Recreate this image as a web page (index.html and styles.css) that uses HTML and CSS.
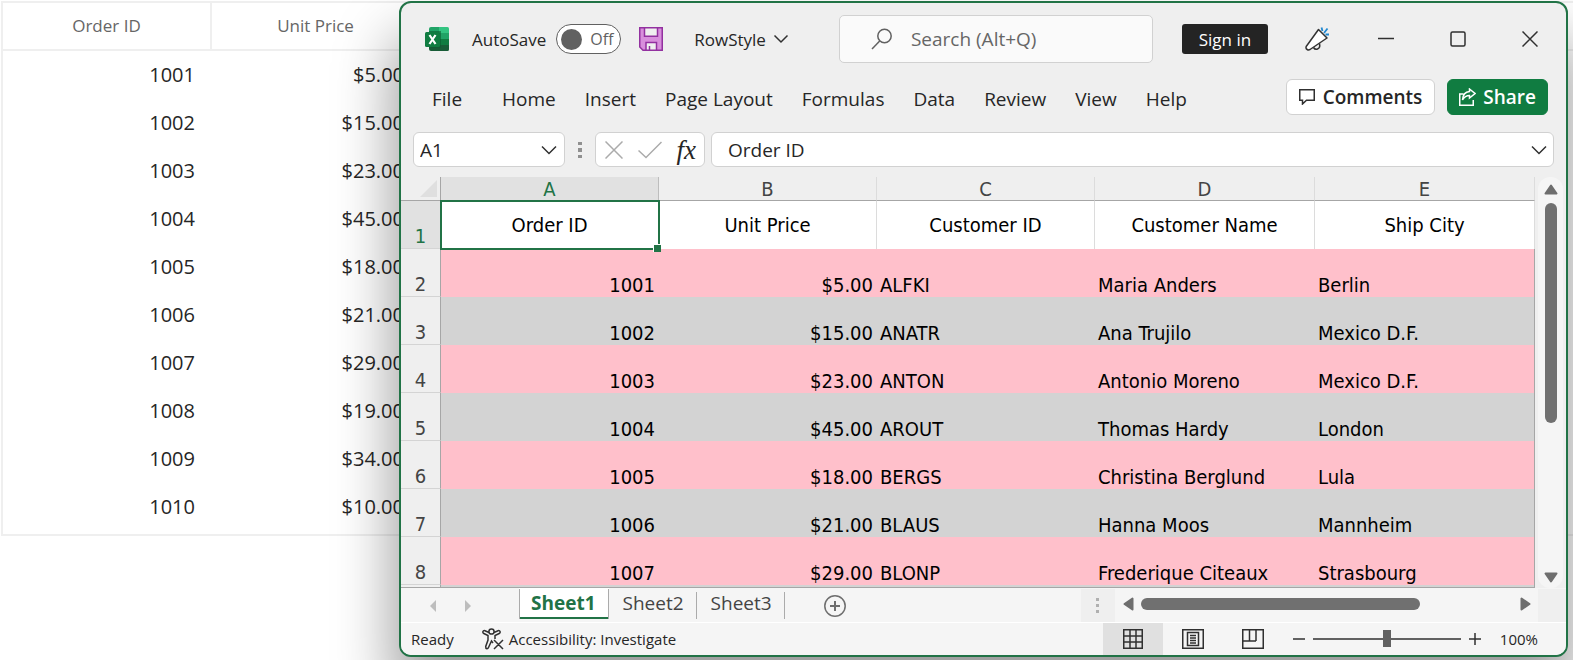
FILE: index.html
```html
<!DOCTYPE html>
<html lang="en">
<head>
<meta charset="utf-8">
<title>RowStyle</title>
<link rel="stylesheet" href="styles.css">
</head>
<body>
<main class="desktop">
  <table class="orders">
    <thead>
      <tr><th>Order ID</th><th>Unit Price</th><th class="rest"></th></tr>
    </thead>
    <tbody>
      <tr><td>1001</td><td>$5.00</td><td></td></tr>
      <tr><td>1002</td><td>$15.00</td><td></td></tr>
      <tr><td>1003</td><td>$23.00</td><td></td></tr>
      <tr><td>1004</td><td>$45.00</td><td></td></tr>
      <tr><td>1005</td><td>$18.00</td><td></td></tr>
      <tr><td>1006</td><td>$21.00</td><td></td></tr>
      <tr><td>1007</td><td>$29.00</td><td></td></tr>
      <tr><td>1008</td><td>$19.00</td><td></td></tr>
      <tr><td>1009</td><td>$34.00</td><td></td></tr>
      <tr><td>1010</td><td>$10.00</td><td></td></tr>
    </tbody>
  </table>

  <section class="window">
    <header class="titlebar">
      <svg class="app-icon" width="24" height="24" viewBox="0 0 24 24" aria-hidden="true">
        <path fill="#21a366" d="M6 0h9v6H4V2a2 2 0 0 1 2-2z"/>
        <path fill="#33c481" d="M14 0h8.500Q24 0 24 1.500V6H14z"/>
        <path fill="#107c41" d="M4 6h10v6H4z"/>
        <path fill="#21a366" d="M14 6h10v6H14z"/>
        <path fill="#185c37" d="M4 12h10v6h10v4.500q0 1.500-1.500 1.500H6q-2 0-2-2z"/>
        <path fill="#107c41" d="M14 12h10v6H14z"/>
        <path fill="#0b5a2f" opacity=".6" d="M4 4h12v16.500H4z"/>
        <rect y="5" width="15" height="15" rx="1.500" fill="#107c41"/>
        <path stroke="#fff" stroke-width="2.200" fill="none" d="M4.500 8l6 9M10.500 8l-6 9"/>
      </svg>
      <label class="autosave">AutoSave
        <span class="toggle"><input type="checkbox"><span>Off</span></span>
      </label>
      <button class="plain save" aria-label="Save">
        <svg width="24" height="24" viewBox="0 0 24 24">
          <path fill="#d88fdc" stroke="#9331a0" stroke-width="1.500" d="M.75.75h22.500v22.500H4L.75 20z"/>
          <path fill="#efefef" stroke="#9331a0" stroke-width="1.500" d="M5.500.75h13v8.500h-13zM7 23.250V15.500h10.500v7.750z"/>
          <path stroke="#9331a0" stroke-width="1.500" d="M10.500 19v4.500"/>
        </svg>
      </button>
      <button class="plain file-name">RowStyle
        <svg width="16" height="10" viewBox="0 0 16 10"><path class="line dark" d="M1.500 1.500L8 8l6.500-6.500"/></svg>
      </button>
      <label class="search">
        <svg width="22" height="22" viewBox="0 0 22 22"><circle class="line gray" cx="13.500" cy="8" r="6.700"/><path class="line gray" d="M8.700 13L1 21"/></svg>
        <input type="search" placeholder="Search (Alt+Q)" aria-label="Search">
      </label>
      <button class="sign-in">Sign in</button>
      <button class="plain whats-new" aria-label="What's new">
        <svg width="24" height="24" viewBox="0 0 24 24">
          <path fill="#fff" stroke="#333" stroke-width="1.500" stroke-linejoin="round" d="M13.500 2.500L22 11 5 22.500q-1.500.8-2.800 0-1.700-1-1-3z"/>
          <path fill="none" stroke="#333" stroke-width="1.500" d="M8.500 20.500q1.500 2.500 4 1.500 3-1 2-5.500"/>
          <path stroke="#1f87d0" stroke-width="1.800" d="M16.500.5l1 3.500M22.500 1.500L19 6M20.500 7.500H24"/>
        </svg>
      </button>
      <div class="window-buttons">
        <button class="plain" aria-label="Minimize"><svg width="16" height="16" viewBox="0 0 16 16"><path class="line dark" d="M0 7.500h16"/></svg></button>
        <button class="plain" aria-label="Maximize"><svg width="16" height="16" viewBox="0 0 16 16"><rect class="line dark" x="1" y="1" width="14" height="14" rx="1.500"/></svg></button>
        <button class="plain" aria-label="Close"><svg width="16" height="16" viewBox="0 0 16 16"><path class="line dark" d="M.5.500l15 15M15.500.500l-15 15"/></svg></button>
      </div>
    </header>

    <nav class="ribbon">
      <button class="plain file-tab">File</button>
      <button class="plain">Home</button>
      <button class="plain">Insert</button>
      <button class="plain">Page Layout</button>
      <button class="plain">Formulas</button>
      <button class="plain">Data</button>
      <button class="plain">Review</button>
      <button class="plain">View</button>
      <button class="plain">Help</button>
      <div class="ribbon-actions">
        <button class="comments">
          <svg width="16" height="16" viewBox="0 0 16 16"><path class="line dark" d="M.75.75h14.500v10.500H7.500L3.500 15v-3.750H.75z"/></svg>
          Comments
        </button>
        <button class="share">
          <svg width="17" height="18" viewBox="0 0 17 18"><path class="line white" d="M4.500 6H.75v11.250h13.500V12M10.500 1l5.500 4.500-5.500 4.500V7.500Q6 7.500 3.500 12 4 4 10.500 3.500z"/></svg>
          Share
        </button>
      </div>
    </nav>

    <div class="formula-bar">
      <div class="name-box">
        <select aria-label="Name box"><option>A1</option></select>
        <svg class="name-chevron" width="16" height="10" viewBox="0 0 16 10"><path class="line dark" d="M1 1.500L8 8.500l7-7"/></svg>
      </div>
      <svg class="grip" width="4" height="16" viewBox="0 0 4 16"><path fill="#909090" d="M0 0h4v3H0zM0 6h4v4H0zM0 13h4v3H0z"/></svg>
      <div class="fx-tools">
        <button class="plain" aria-label="Cancel"><svg width="18" height="18" viewBox="0 0 18 18"><path class="line pale" d="M.5.500l17 17M17.500.500l-17 17"/></svg></button>
        <button class="plain" aria-label="Enter"><svg width="24" height="18" viewBox="0 0 24 18"><path class="line pale" d="M.5 9.500L8 16.500 23.500 1"/></svg></button>
        <button class="plain fx" aria-label="Insert function">fx</button>
      </div>
      <div class="formula">
        <input type="text" value="Order ID" aria-label="Formula">
        <button class="plain" aria-label="Expand formula bar"><svg width="16" height="10" viewBox="0 0 16 10"><path class="line dark" d="M1 1.500L8 8.500l7-7"/></svg></button>
      </div>
    </div>

    <div class="workbook">
      <div class="grid-view">
        <table class="sheet">
          <colgroup><col class="col-index"><col class="col-a"><col class="col-b"><col class="col-b"><col class="col-d"><col></colgroup>
          <thead>
            <tr>
              <th class="corner"><svg width="17" height="17" viewBox="0 0 17 17"><path fill="#dfdfdf" d="M17 0v17H0z"/></svg></th>
              <th class="active">A</th><th>B</th><th>C</th><th>D</th><th>E</th>
            </tr>
          </thead>
          <tbody>
            <tr class="titles"><th class="active">1</th><td class="selected">Order ID<span class="fill-handle"></span></td><td>Unit Price</td><td>Customer ID</td><td>Customer Name</td><td>Ship City</td></tr>
            <tr><th>2</th><td class="num">1001</td><td class="num">$5.00</td><td>ALFKI</td><td>Maria Anders</td><td>Berlin</td></tr>
            <tr><th>3</th><td class="num">1002</td><td class="num">$15.00</td><td>ANATR</td><td>Ana Trujilo</td><td>Mexico D.F.</td></tr>
            <tr><th>4</th><td class="num">1003</td><td class="num">$23.00</td><td>ANTON</td><td>Antonio Moreno</td><td>Mexico D.F.</td></tr>
            <tr><th>5</th><td class="num">1004</td><td class="num">$45.00</td><td>AROUT</td><td>Thomas Hardy</td><td>London</td></tr>
            <tr><th>6</th><td class="num">1005</td><td class="num">$18.00</td><td>BERGS</td><td>Christina Berglund</td><td>Lula</td></tr>
            <tr><th>7</th><td class="num">1006</td><td class="num">$21.00</td><td>BLAUS</td><td>Hanna Moos</td><td>Mannheim</td></tr>
            <tr><th>8</th><td class="num">1007</td><td class="num">$29.00</td><td>BLONP</td><td>Frederique Citeaux</td><td>Strasbourg</td></tr>
            <tr><th></th><td></td><td></td><td></td><td></td><td></td></tr>
          </tbody>
        </table>
      </div>
      <div class="v-scroll">
        <svg width="14" height="11" viewBox="0 0 14 11"><path class="arrow" d="M7 1.500L12.500 9.500h-11z"/></svg>
        <div class="v-track"><div class="v-thumb"></div></div>
        <svg width="14" height="11" viewBox="0 0 14 11"><path class="arrow" d="M7 9.500L1.500 1.500h11z"/></svg>
      </div>
    </div>

    <div class="sheet-bar">
      <button class="plain prev" aria-label="Previous sheet"><svg width="6" height="12" viewBox="0 0 6 12"><path fill="#bdbdbd" d="M6 0v12L0 6z"/></svg></button>
      <button class="plain next" aria-label="Next sheet"><svg width="6" height="12" viewBox="0 0 6 12"><path fill="#bdbdbd" d="M0 0v12l6-6z"/></svg></button>
      <button class="tab current">Sheet1</button>
      <button class="tab">Sheet2</button>
      <button class="tab">Sheet3</button>
      <button class="plain add" aria-label="New sheet"><svg width="22" height="22" viewBox="0 0 22 22"><circle class="line mid" cx="11" cy="11" r="10.200"/><path class="line mid bold" d="M11 6v10M6 11h10"/></svg></button>
      <div class="splitter"><svg class="grip" width="3" height="16" viewBox="0 0 3 16"><path fill="#b0b0b0" d="M0 0h3v3H0zM0 6h3v3H0zM0 12h3v3H0z"/></svg></div>
      <div class="h-scroll">
        <svg width="11" height="14" viewBox="0 0 11 14"><path class="arrow" d="M1.500 7L9.500 1.500v11z"/></svg>
        <div class="h-track"><div class="h-thumb"></div></div>
        <svg width="11" height="14" viewBox="0 0 11 14"><path class="arrow" d="M9.500 7L1.500 1.500v11z"/></svg>
      </div>
      <div class="scroll-corner"></div>
    </div>

    <footer class="status">
      <span>Ready</span>
      <button class="plain access">
        <svg width="22" height="22" viewBox="0 0 22 22"><circle class="line dark" cx="9.500" cy="3.500" r="2.600"/><path class="line dark" d="M7 4.500L3 2.700Q1 2.300.8 4q0 1 1 1.500L6 7.500v4.500l-2.300 6.500q-.2 2 1.300 2.200 1 0 1.500-1.200L9.500 13l1.500 2M12 4.500l4-1.800q2-.4 2.200 1.300 0 1-1 1.500L13 7.500V11M12 12l9 9M21 12l-9 9"/></svg>
        Accessibility: Investigate
      </button>
      <div class="views">
        <button class="view on" aria-label="Normal view"><svg width="20" height="20" viewBox="0 0 20 20"><path class="line dark" d="M.75.75h18.500v18.500H.75zM7 1v18M13 1v18M1 7h18M1 13h18"/></svg></button>
        <button class="view" aria-label="Page layout view"><svg width="22" height="20" viewBox="0 0 22 20"><path class="line dark" d="M.75.75h20.500v18.500H.75zM5.500 3.500h11v13h-11zM8 6.500h6M8 9h6M8 11.500h6M8 14h6"/></svg></button>
        <button class="view" aria-label="Page break preview"><svg width="22" height="20" viewBox="0 0 22 20"><path class="line dark" d="M.75.75h20.500v18.500H.75zM7.500 1v11M14 1v11M1 12h13"/></svg></button>
      </div>
      <button class="plain" aria-label="Zoom out"><svg width="12" height="12" viewBox="0 0 12 12"><path class="line dark" d="M0 6h12"/></svg></button>
      <input class="zoom" type="range" min="0" max="100" value="50" aria-label="Zoom">
      <button class="plain" aria-label="Zoom in"><svg width="12" height="12" viewBox="0 0 12 12"><path class="line dark" d="M0 6h12M6 0v12"/></svg></button>
      <span class="percent">100%</span>
    </footer>
  </section>
</main>
</body>
</html>
```
FILE: styles.css
```css
* { box-sizing: border-box; }

body {
  margin: 0;
  background: #fff;
  color: #262626;
  font-family: "Open Sans", "Noto Sans", sans-serif;
  font-size: 19px;
}

button, input, select { font: inherit; color: inherit; margin: 0; }
svg { display: block; flex: none; }

.line { fill: none; stroke-width: 1.5; }
.dark { stroke: #303030; }
.gray { stroke: #616161; }
.mid { stroke: #6e6e6e; }
.pale { stroke: #ababab; }
.white { stroke: #fff; }
.bold { stroke-width: 2; }
.arrow { fill: #6e6e6e; stroke: #6e6e6e; stroke-width: 2; stroke-linejoin: round; }

.desktop {
  position: relative;
  min-height: 100vh;
  overflow: hidden;
  padding: 1px 0 0 1px;
}

/* Source grid behind the spreadsheet window */
.orders {
  width: 100%;
  table-layout: fixed;
  border: 2px solid #efefef;
  border-spacing: 0;
  border-right: 0;
}
.orders th {
  width: 209px;
  height: 48px;
  padding: 0 0 2px;
  border-bottom: 2px solid #efefef;
  border-right: 2px solid #efefef;
  color: #666;
  font-size: 17px;
  font-weight: 400;
}
.orders .rest { width: auto; border-right: 0; }
.orders td {
  height: 48px;
  padding: 0 17px 2px 0;
  font-size: 20px;
  text-align: right;
}
.orders tr:last-child td { height: 51px; padding-bottom: 5px; }

/* Spreadsheet window */
.window {
  position: absolute;
  inset: 1px 5px 3px 399px;
  display: flex;
  flex-direction: column;
  border: 2px solid #217346;
  border-radius: 12px;
  background: #efefef;
  box-shadow: 0 40px 60px 4px rgba(0, 0, 0, 0.4);
}

.plain {
  display: flex;
  align-items: center;
  padding: 0;
  border: 0;
  background: none;
  white-space: nowrap;
}

.titlebar {
  display: flex;
  align-items: center;
  height: 72px;
  padding: 0 28px 0 24px;
  font-size: 17px;
}
.app-icon { margin-right: 23px; }
.autosave { display: flex; align-items: center; gap: 10px; }
.toggle {
  display: flex;
  align-items: center;
  gap: 8px;
  width: 65px;
  height: 30px;
  padding-left: 4px;
  border: 1px solid #616161;
  border-radius: 15px;
  background: #fff;
  color: #616161;
  font-size: 16px;
}
.toggle input {
  appearance: none;
  width: 21px;
  height: 21px;
  border-radius: 50%;
  background: #616161;
}
.save { margin: 0 31px 0 18px; }
.file-name { gap: 7px; }
.search {
  display: flex;
  align-items: center;
  flex: 0 1 314px;
  height: 48px;
  margin: 0 29px 0 50px;
  padding-left: 31px;
  gap: 18px;
  border: 1px solid #d1d1d1;
  border-radius: 5px;
  background: #fafafa;
}
.search input {
  width: 100%;
  min-width: 0;
  padding: 0;
  border: 0;
  background: none;
  outline: 0;
  font-size: 19px;
}
.search input::placeholder { color: #666; opacity: 1; }
.sign-in {
  width: 86px;
  height: 30px;
  padding: 0;
  border: 0;
  border-radius: 3px;
  background: #242424;
  color: #fff;
  font-size: 17px;
}
.whats-new { margin-left: 37px; }
.window-buttons { display: flex; gap: 56px; margin-left: auto; }

.ribbon {
  display: flex;
  align-items: center;
  height: 44px;
  padding: 0 18px 0 31px;
  gap: 29px;
}
.ribbon .plain { padding-top: 3px; }
.file-tab { margin-right: 11px; }
.ribbon-actions { display: flex; gap: 12px; margin-left: auto; }
.comments, .share {
  display: flex;
  align-items: center;
  height: 36px;
  padding: 0 12px 0 12px;
  gap: 8px;
  border: 1px solid #d1d1d1;
  border-radius: 6px;
  background: #fff;
  font-weight: 600;
}
.share { padding: 0 11px; gap: 7px; border-color: #107c41; background: #107c41; color: #fff; }

.formula-bar {
  display: flex;
  align-items: center;
  padding: 13px 12px 10px;
}
.name-box, .fx-tools, .formula {
  display: flex;
  align-items: center;
  height: 35px;
  border: 1px solid #d1d1d1;
  border-radius: 6px;
  background: #fff;
}
.name-box { position: relative; width: 152px; }
.name-box select {
  appearance: none;
  width: 100%;
  height: 100%;
  padding: 0 6px;
  border: 0;
  background: none;
}
.name-chevron { position: absolute; right: 7px; pointer-events: none; }
.grip { margin: 0 13px; }
.fx-tools { width: 110px; padding: 0 8px 0 9px; justify-content: space-between; }
.fx {
  font-family: "Liberation Serif", serif;
  font-size: 27px;
  font-style: italic;
  line-height: 28px;
}
.formula { flex: 1; margin-left: 6px; padding: 0 6px 0 16px; }
.formula input { flex: 1; min-width: 0; padding: 0; border: 0; outline: 0; background: none; }

.workbook { display: flex; flex: 1; min-height: 0; border-bottom: 1px solid #f5f5f5; }
.grid-view {
  flex: 1;
  min-width: 0;
  overflow: hidden;
  border-bottom: 1px solid #a6a6a6;
}
.sheet {
  width: 100%;
  table-layout: fixed;
  border-spacing: 0;
  color: #000;
  font-family: "DejaVu Sans Condensed", "DejaVu Sans", sans-serif;
  font-stretch: condensed;
  font-size: 20px;
}
.col-index { width: 40px; }
.col-a { width: 218px; }
.col-b { width: 218px; }
.col-d { width: 220px; }
.sheet th { padding: 0; color: #444; font-weight: 400; }
.sheet thead th {
  height: 24px;
  border-right: 1px solid #dcdcdc;
  border-bottom: 1px solid #a6a6a6;
  line-height: 22px;
}
.sheet thead .corner { border-right-color: #a6a6a6; padding: 0 3px 0 19px; }
.sheet .active { background: #e1e1e1; color: #217346; }
.sheet thead .active { border-right-color: #bdbdbd; }
.sheet td, .sheet tbody th { height: 48px; line-height: 24px; vertical-align: bottom; }
.sheet tbody th { border-right: 1px solid #a6a6a6; border-bottom: 1px solid #d4d4d4; }
.sheet td { padding: 0 3px; white-space: nowrap; }
.sheet td:last-child { border-right: 1px solid #a6a6a6; }
.sheet tr:nth-child(even) td { background: #ffc0cb; }
.sheet tr:nth-child(odd) td { background: #d3d3d3; }
.sheet .num { padding-right: 4px; text-align: right; }
.sheet tr.titles td {
  border-right: 1px solid #dcdcdc;
  background: #fff;
  text-align: center;
  vertical-align: middle;
}
.sheet .selected { position: relative; outline: 2px solid #217346; outline-offset: -1px; }
.fill-handle {
  position: absolute;
  right: -3px;
  bottom: -3px;
  width: 8px;
  height: 8px;
  border: solid #fff;
  border-width: 1px 0 0 1px;
  background: #217346;
}

.v-scroll {
  display: flex;
  flex-direction: column;
  align-items: center;
  width: 25px;
  margin: 0 3px;
  padding: 7px 0 5px;
  gap: 8px;
  border-radius: 12px;
  background: #f5f5f5;
}
.v-track { flex: 1; }
.v-thumb { width: 12px; height: 61%; border-radius: 6px; background: #707070; }

.sheet-bar {
  display: flex;
  height: 34px;
  padding-left: 29px;
  border-bottom: 1px solid #fff;
  background: #f5f5f5;
}
.next { margin: 0 48px 0 29px; }
.tab {
  position: relative;
  height: 30px;
  padding: 0 13px 2px 14px;
  border: 0;
  background: none;
  color: #444;
  line-height: 24px;
}
.tab:not(.current)::after {
  content: "";
  position: absolute;
  right: 0;
  top: 3px;
  bottom: 0;
  border-right: 1px solid #ababab;
}
.current {
  padding: 0 12px 2px 11px;
  border: solid #ababab;
  border-width: 0 1px;
  box-shadow: 0 -1px #fff, inset 0 -2px #217346;
  background: #fff;
  color: #217346;
  font-weight: 700;
}
.add { margin-left: 39px; }
.splitter { display: flex; align-items: center; width: 34px; margin-left: auto; background: #efefef; }
.splitter .grip { margin: 0 15px; }
.h-scroll { display: flex; align-items: center; flex: 0 1 423px; padding: 0 7px 4px 8px; gap: 7px; }
.h-track { flex: 1; }
.h-thumb { width: 75%; height: 12px; border-radius: 6px; background: #707070; }
.scroll-corner { width: 28px; background: #efefef; }

.status {
  display: flex;
  align-items: center;
  height: 32px;
  padding: 0 28px 0 10px;
  border-radius: 0 0 10px 10px;
  background: #f5f5f5;
  font-size: 15px;
}
.access { margin-left: 28px; gap: 5px; }
.views { display: flex; height: 32px; margin: 0 10px 0 auto; }
.view {
  display: flex;
  align-items: center;
  justify-content: center;
  width: 60px;
  padding: 0;
  border: 0;
  background: none;
}
.on { background: #e0e0e0; }
.zoom { appearance: none; width: 148px; height: 18px; margin: 0 8px; background: none; }
.zoom::-webkit-slider-runnable-track { height: 2px; background: #616161; }
.zoom::-webkit-slider-thumb { appearance: none; width: 8px; height: 17px; margin-top: -8px; background: #616161; }
.percent { margin-left: 19px; }
```
